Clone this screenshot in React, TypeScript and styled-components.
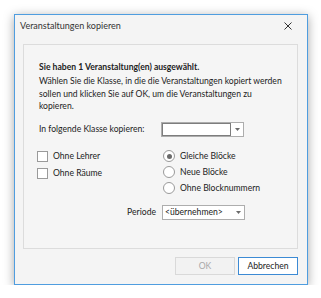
import styled, { createGlobalStyle } from "styled-components";

const GlobalStyle = createGlobalStyle`
  html, body {
    margin: 0;
    padding: 0;
    background: #ffffff;
  }
  body {
    font-family: Lato, "Noto Sans", sans-serif;
    font-size: 8.6px;
    color: #222;
  }
`;

const Page = styled.div`
  padding: 14px 0 0 14px;
`;

const Window = styled.div`
  width: 292px;
  height: 269px;
  border: 1px solid #4f9ddf;
  background: #f4f4f4;
  box-shadow: 0 2px 10px rgba(0, 0, 0, 0.35);
  display: flex;
  flex-direction: column;
`;

const TitleBar = styled.div`
  height: 29px;
  display: flex;
  align-items: flex-start;
  justify-content: space-between;
  padding: 4px 0 0 5px;
  box-sizing: border-box;
`;

const Title = styled.div`
  font-size: 9px;
  line-height: 12px;
  margin-top: 1px;
  color: #333;
`;

const CloseButton = styled.div`
  width: 26px;
  height: 14px;
  display: flex;
  align-items: center;
  justify-content: center;
  margin: 0 6px 0 0;
`;

const Panel = styled.div`
  margin: 0 9px 0 8px;
  height: 205px;
  box-sizing: border-box;
  border: 1px solid #dcdcdc;
  background: #f5f5f5;
  padding: 16px 10px 0 15px;
  display: flex;
  flex-direction: column;
`;

const Heading = styled.div`
  font-weight: bold;
  line-height: 12px;
`;

const Text = styled.div`
  margin-top: 2px;
  white-space: nowrap;
  line-height: 12.5px;
`;

const FieldRow = styled.div`
  display: grid;
  grid-template-columns: 122px auto;
  align-items: center;
  margin-top: 9px;
`;

const Options = styled.div`
  display: grid;
  grid-template-columns: 124px auto;
  margin-top: 13px;
`;

const CheckList = styled.div`
  display: flex;
  flex-direction: column;
  gap: 4px;
  margin-left: -2px;
`;

const RadioList = styled.div`
  display: flex;
  flex-direction: column;
  gap: 3px;
`;

const Choice = styled.div`
  display: flex;
  align-items: center;
  height: 13px;
  gap: 5px;
`;

const CheckBox = styled.div`
  width: 9px;
  height: 9px;
  border: 1px solid #9a9a9a;
  background: #fff;
`;

const Radio = styled.div<{ $checked?: boolean }>`
  width: 10px;
  height: 10px;
  border-radius: 50%;
  border: 1px solid #9a9a9a;
  background: #fff;
  display: flex;
  align-items: center;
  justify-content: center;

  &::after {
    content: "";
    width: 5px;
    height: 5px;
    border-radius: 50%;
    background: ${(p) => (p.$checked ? "#6a6a6a" : "transparent")};
  }
`;

const PeriodRow = styled.div`
  display: flex;
  align-items: center;
  justify-content: flex-end;
  width: 206px;
  gap: 6px;
  margin-top: 10px;
`;

const Combo = styled.div`
  width: 83px;
  height: 15px;
  box-sizing: border-box;
  border: 1px solid #adadad;
  background: #fff;
  display: flex;
`;

const ComboEdit = styled.div<{ $focused?: boolean }>`
  flex: 1;
  box-sizing: border-box;
  border: ${(p) => (p.$focused ? "1px solid #7d7d7d" : "none")};
  padding-left: 2px;
  line-height: 13px;
  white-space: nowrap;
  overflow: hidden;
`;

const ComboArrow = styled.div`
  width: 12px;
  display: flex;
  align-items: center;
  justify-content: center;
`;

const Footer = styled.div`
  display: flex;
  justify-content: flex-end;
  gap: 3px;
  margin: 8px 9px 0 0;
`;

const Button = styled.div<{ $disabled?: boolean; $default?: boolean }>`
  width: 60px;
  height: 18px;
  box-sizing: border-box;
  display: flex;
  align-items: center;
  justify-content: center;
  border: 1px solid ${(p) => (p.$default ? "#3c8ad4" : "#d9d9d9")};
  background: ${(p) => (p.$disabled ? "#f2f2f2" : "#fff")};
  color: ${(p) => (p.$disabled ? "#a8a8a8" : "#222")};
`;

const Arrow = () => (
  <svg width="5" height="3" viewBox="0 0 5 3">
    <path d="M0 0 H5 L2.5 3 Z" fill="#6b6b6b" />
  </svg>
);

export default function App() {
  return (
    <>
      <GlobalStyle />
      <Page>
        <Window>
          <TitleBar>
            <Title>Veranstaltungen kopieren</Title>
            <CloseButton>
              <svg width="8" height="8" viewBox="0 0 8 8">
                <path d="M0.5 0.5 L7.5 7.5 M7.5 0.5 L0.5 7.5" stroke="#333" strokeWidth="1" />
              </svg>
            </CloseButton>
          </TitleBar>
          <Panel>
            <Heading>Sie haben 1 Veranstaltung(en) ausgewählt.</Heading>
            <Text>
              Wählen Sie die Klasse, in die die Veranstaltungen kopiert werden
              <br />
              sollen und klicken Sie auf OK, um die Veranstaltungen zu
              <br />
              kopieren.
            </Text>
            <FieldRow>
              <span>In folgende Klasse kopieren:</span>
              <Combo>
                <ComboEdit $focused />
                <ComboArrow>
                  <Arrow />
                </ComboArrow>
              </Combo>
            </FieldRow>
            <Options>
              <CheckList>
                <Choice>
                  <CheckBox />
                  Ohne Lehrer
                </Choice>
                <Choice>
                  <CheckBox />
                  Ohne Räume
                </Choice>
              </CheckList>
              <RadioList>
                <Choice>
                  <Radio $checked />
                  Gleiche Blöcke
                </Choice>
                <Choice>
                  <Radio />
                  Neue Blöcke
                </Choice>
                <Choice>
                  <Radio />
                  Ohne Blocknummern
                </Choice>
              </RadioList>
            </Options>
            <PeriodRow>
              <span>Periode</span>
              <Combo>
                <ComboEdit>&lt;übernehmen&gt;</ComboEdit>
                <ComboArrow>
                  <Arrow />
                </ComboArrow>
              </Combo>
            </PeriodRow>
          </Panel>
          <Footer>
            <Button $disabled>OK</Button>
            <Button $default>Abbrechen</Button>
          </Footer>
        </Window>
      </Page>
    </>
  );
}
